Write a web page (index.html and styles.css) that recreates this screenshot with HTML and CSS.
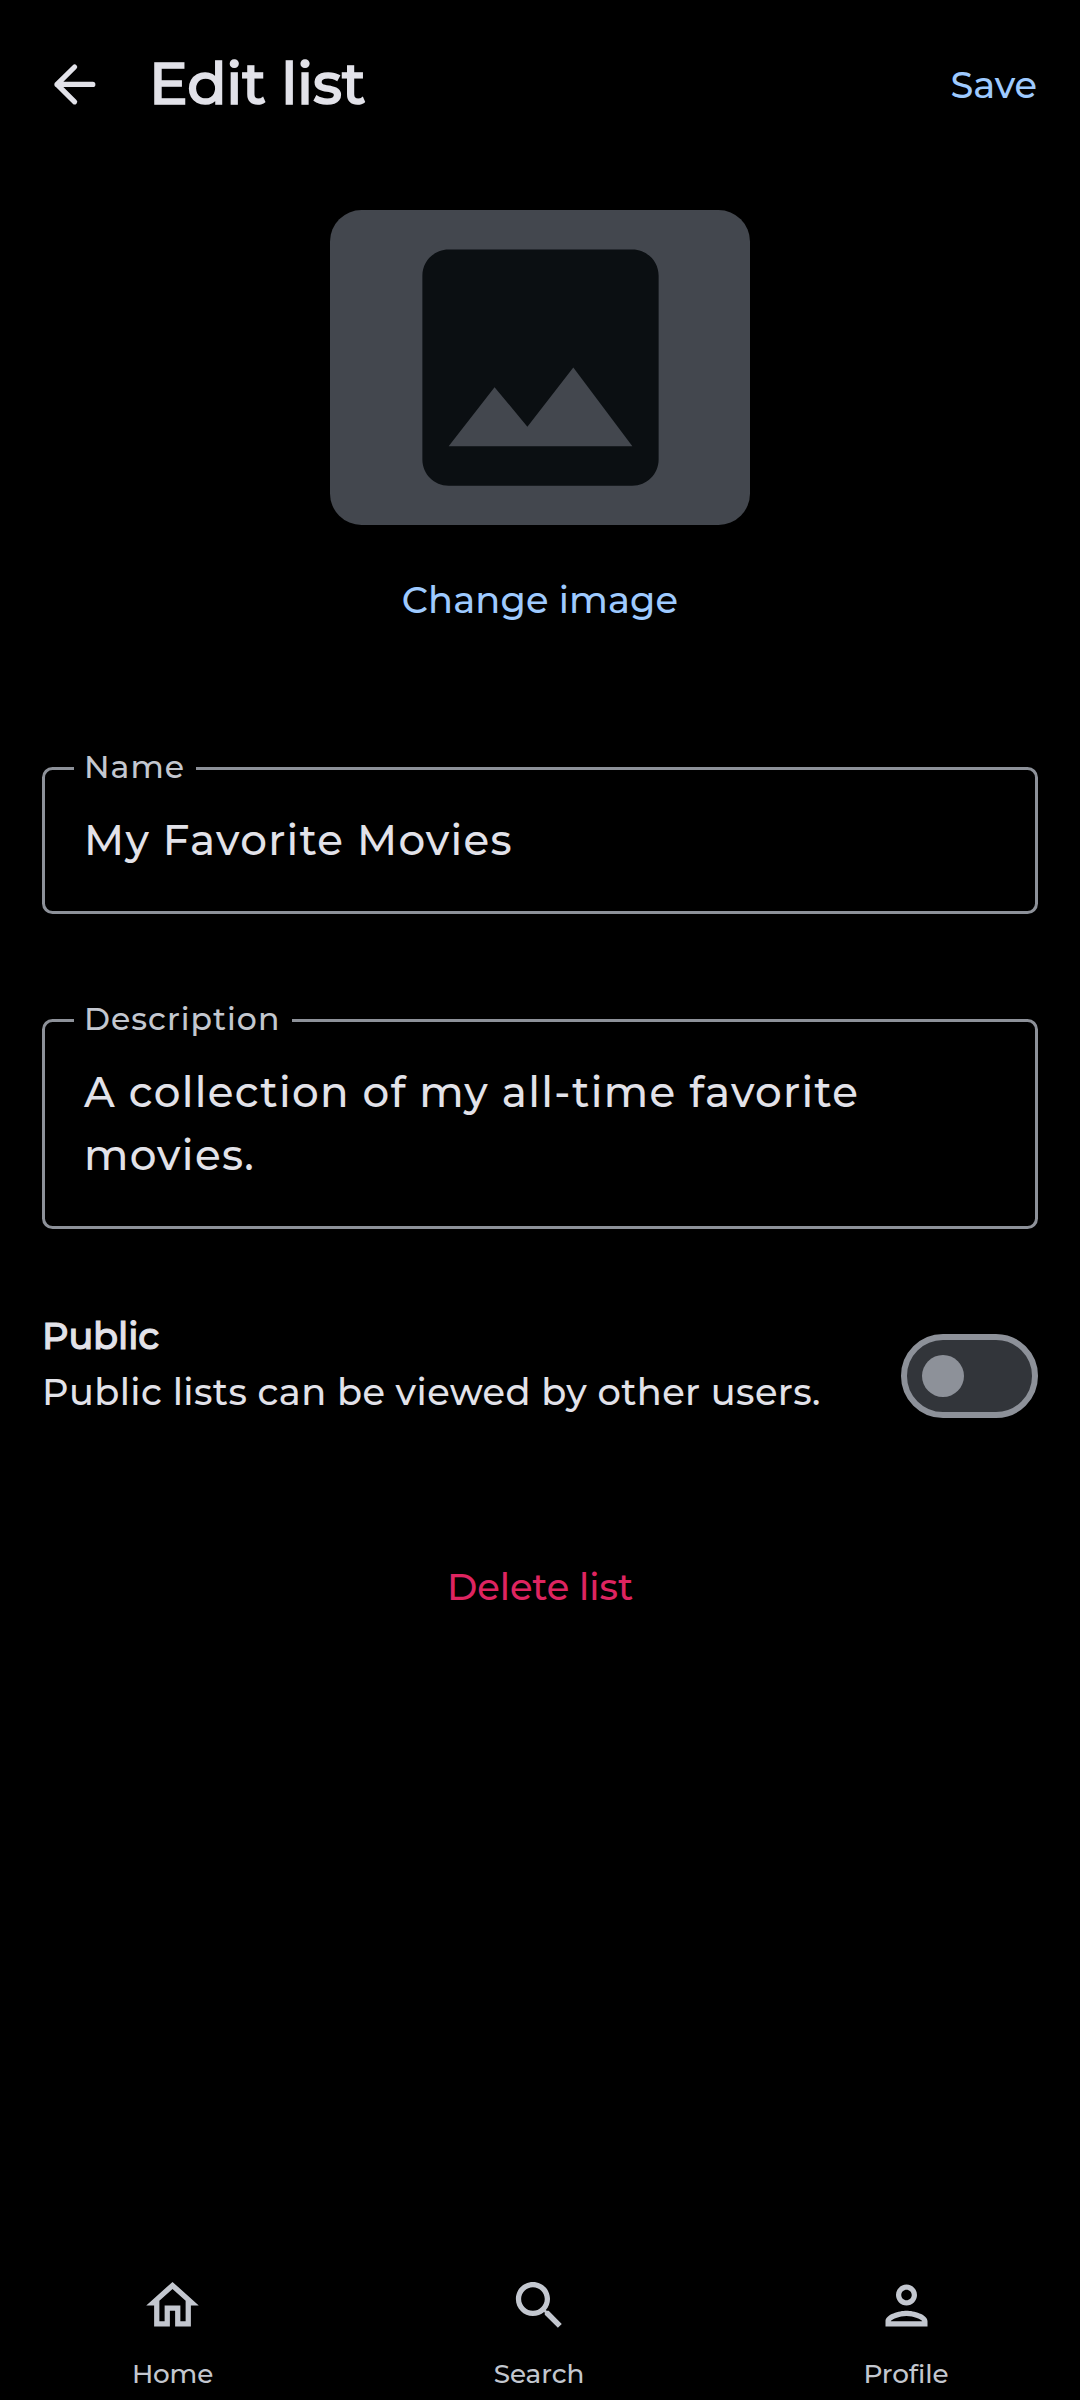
FILE: index.html
```html
<!DOCTYPE html>
<html lang="en">
<head>
<meta charset="utf-8">
<title>Edit list</title>
<link rel="stylesheet" href="styles.css">
</head>
<body>
<div class="screen">
  <header class="topbar">
    <svg class="back" viewBox="0 0 63 63" aria-label="Back"><path d="M51.8 31.4H16M33.6 14L16 31.4l17.6 17.4"/></svg>
    <h1 class="title">Edit list</h1>
    <span class="action save">Save</span>
  </header>

  <main class="content">
    <div class="cover">
      <svg viewBox="0 0 24 24"><path d="M21 19V5c0-1.1-.9-2-2-2H5c-1.1 0-2 .9-2 2v14c0 1.1.9 2 2 2h14c1.1 0 2-.9 2-2zM8.5 13.5l2.5 3.01L14.5 12l4.5 6H5l3.5-4.5z"/></svg>
    </div>
    <span class="action change">Change image</span>

    <fieldset class="field field-name">
      <legend class="label-name">Name</legend>
      <p class="value">My Favorite Movies</p>
    </fieldset>
    <fieldset class="field field-description">
      <legend class="label-description">Description</legend>
      <p class="value">A collection of my all-time favorite movies.</p>
    </fieldset>

    <div class="setting">
      <div class="setting-text">
        <strong class="setting-title">Public</strong>
        <span class="setting-hint">Public lists can be viewed by other users.</span>
      </div>
      <div class="switch"><div class="knob"></div></div>
    </div>

    <span class="action delete">Delete list</span>
  </main>

  <nav class="navbar">
    <div class="tab">
      <svg viewBox="0 0 24 24"><path d="M12 5.69l5 4.5V18h-2v-6H9v6H7v-7.81l5-4.5M12 3L2 12h3v8h6v-6h2v6h6v-8h3L12 3z"/></svg>
      <span class="home">Home</span>
    </div>
    <div class="tab">
      <svg viewBox="0 0 24 24"><path d="M15.5 14h-.79l-.28-.27C15.41 12.59 16 11.11 16 9.5 16 5.91 13.09 3 9.5 3S3 5.91 3 9.5 5.91 16 9.5 16c1.61 0 3.09-.59 4.23-1.57l.27.28v.79l5 4.99L20.49 19l-4.99-5zm-6 0C7.01 14 5 11.99 5 9.5S7.01 5 9.5 5 14 7.01 14 9.5 11.99 14 9.5 14z"/></svg>
      <span>Search</span>
    </div>
    <div class="tab">
      <svg viewBox="0 0 24 24"><path d="M12 6c1.1 0 2 .9 2 2s-.9 2-2 2-2-.9-2-2 .9-2 2-2m0 10c2.7 0 5.8 1.29 6 2H6c.23-.72 3.31-2 6-2m0-12C9.79 4 8 5.79 8 8s1.79 4 4 4 4-1.79 4-4-1.79-4-4-4zm0 10c-2.67 0-8 1.34-8 4v2h16v-2c0-2.66-5.33-4-8-4z"/></svg>
      <span>Profile</span>
    </div>
  </nav>
</div>
</body>
</html>
```
FILE: styles.css
```css
* { box-sizing: border-box; margin: 0; padding: 0; }

body {
  background: #000;
  color: #e2e2e9;
  font-family: "Montserrat", "Inter", sans-serif;
  font-weight: 500;
}

.screen {
  display: flex;
  flex-direction: column;
  width: 1080px;
  height: 2400px;
  overflow: hidden;
}

/* Top bar */
.topbar {
  display: flex;
  align-items: center;
  height: 168px;
  padding: 0 43px 0 41px;
}

.back {
  width: 63px;
  height: 63px;
  margin-top: 1px;
  fill: none;
  stroke: currentColor;
  stroke-width: 5.2;
  stroke-linecap: round;
  stroke-linejoin: round;
}

.title {
  flex: 1;
  margin: 0 0 2px 45px;
  font-size: 57.75px;
  font-weight: 500;
  line-height: 76px;
  letter-spacing: -0.18px;
  -webkit-text-stroke: 1.6px currentColor;
}

.action {
  font-size: 36.75px;
  line-height: 52px;
  color: #9ecaff;
}

.save { letter-spacing: -0.1px; margin-top: 2px; }

/* Content */
.content {
  flex: 1;
  display: flex;
  flex-direction: column;
  align-items: center;
  padding: 42px 42px 0;
}

.cover {
  display: flex;
  justify-content: center;
  width: 420px;
  height: 315px;
  border-radius: 31.5px;
  background: #43474e;
}

.cover svg { width: 315px; height: 315px; fill: #0b0f12; }

.change {
  margin-top: 49px;
  letter-spacing: 0.13px;
}

/* Outlined text fields */
.field {
  width: 100%;
  padding: 0 29px;
  border: 3px solid #8d9199;
  border-radius: 10.5px;
}

.field-name { height: 166px; margin-top: 122px; }
.field-description { height: 229px; margin-top: 86px; }

legend {
  height: 41px;
  padding: 0 0 2px 10px;
  font-size: 31.5px;
  line-height: 39px;
  letter-spacing: 1px;
  color: #c3c7cf;
}

.label-name { width: 122px; }
.label-description { width: 218px; }

.value {
  padding: 20px 0 0 10px;
  font-size: 42px;
  line-height: 63px;
  letter-spacing: 1.32px;
}

/* Visibility setting */
.setting {
  display: flex;
  justify-content: space-between;
  width: 100%;
  margin-top: 79px;
}

.setting-text {
  display: flex;
  flex-direction: column;
  font-size: 36.75px;
  line-height: 56px;
}

.setting-title {
  font-weight: 500;
  letter-spacing: -0.15px;
  -webkit-text-stroke: 1.1px currentColor;
}

.setting-hint { letter-spacing: 0.4px; }

.switch {
  display: flex;
  align-items: center;
  width: 137px;
  height: 84px;
  margin-top: 26px;
  padding-left: 15px;
  border: 6px solid #8d9199;
  border-radius: 42px;
  background: #32353a;
}

.knob {
  width: 42px;
  height: 42px;
  border-radius: 50%;
  background: #8d9199;
}

.delete {
  margin-top: 141px;
  letter-spacing: -0.05px;
  color: #de2460;
}

/* Bottom navigation */
.navbar {
  display: grid;
  grid-template-columns: 345px 346px 346px;
  column-gap: 21px;
  height: 126px;
  color: #c3c7cf;
}

.tab {
  display: flex;
  flex-direction: column;
  align-items: center;
  gap: 16px;
  font-size: 26.25px;
  line-height: 42px;
  letter-spacing: -0.05px;
}

.tab svg { width: 63px; height: 63px; fill: currentColor; }

.home { letter-spacing: -0.2px; }
```
